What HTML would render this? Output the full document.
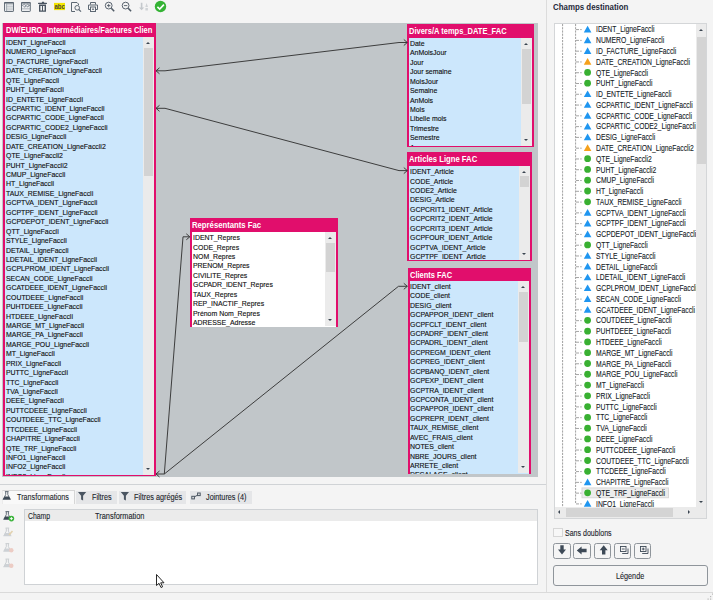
<!DOCTYPE html>
<html><head><meta charset="utf-8"><style>
*{margin:0;padding:0;box-sizing:border-box}
html,body{width:713px;height:600px;overflow:hidden;background:#f4f4f4;font-family:"Liberation Sans", sans-serif;}
body{position:relative}
.abs{position:absolute}
.canvas{position:absolute;left:2px;top:23px;width:536px;height:454px;background:#c1c6c9}
.box{position:absolute;background:#e10e6c;overflow:hidden}
.hd{position:absolute;height:10px;color:#fff;font-size:8.2px;font-weight:bold;line-height:10px;white-space:nowrap;transform-origin:0 0}
.bd{position:absolute;left:2px;right:2px;top:13.8px;bottom:0.8px;overflow:hidden}
.r{position:absolute;left:0.8px;height:9.43px;line-height:9.43px;font-size:8.1px;color:#111;white-space:nowrap;-webkit-text-stroke:0.14px #111;transform:scaleX(0.855);transform-origin:0 0;margin-top:1px}
.sb{position:absolute;right:2px;width:11.2px;background:#ebebeb}
.th{position:absolute;left:1px;right:1px;background:#d3d3d3}
.ua,.da{position:absolute;left:3px;width:0;height:0;border-left:2.5px solid transparent;border-right:2.5px solid transparent}
.ua{top:5px;border-bottom:2.5px solid #3a4550}
.da{bottom:5px;border-top:2.5px solid #3a4550}
.tt{position:absolute;left:40.9px;height:9.4px;line-height:9.4px;font-size:8.6px;color:#141a26;white-space:nowrap;-webkit-text-stroke:0.1px #141a26;transform:scaleX(0.79);transform-origin:0 0;margin-top:0.6px}
.t{position:absolute;white-space:nowrap;font-size:8px;color:#222;letter-spacing:-0.5px;-webkit-text-stroke:0.15px #222}
</style></head><body>

<div class="canvas"></div>
<div class="box" style="left:3px;top:23.25px;width:153px;height:452.75px"><div style="position:absolute;left:0;top:0;width:149.50px;height:14px;overflow:hidden"><div class="hd" style="left:3.1px;top:2.30px;transform:scaleX(0.9218)">DW/EURO_Intermédiaires/Factures Clien</div></div><div class="bd" style="background:#cce7fc;top:13.8px"><div class="r" style="top:0.00px">IDENT_LigneFaccli</div><div class="r" style="top:9.43px">NUMERO_LigneFaccli</div><div class="r" style="top:18.86px">ID_FACTURE_LigneFaccli</div><div class="r" style="top:28.29px">DATE_CREATION_LigneFaccli</div><div class="r" style="top:37.72px">QTE_LigneFaccli</div><div class="r" style="top:47.15px">PUHT_LigneFaccli</div><div class="r" style="top:56.58px">ID_ENTETE_LigneFaccli</div><div class="r" style="top:66.01px">GCPARTIC_IDENT_LigneFaccli</div><div class="r" style="top:75.44px">GCPARTIC_CODE_LigneFaccli</div><div class="r" style="top:84.87px">GCPARTIC_CODE2_LigneFaccli</div><div class="r" style="top:94.30px">DESIG_LigneFaccli</div><div class="r" style="top:103.73px">DATE_CREATION_LigneFaccli2</div><div class="r" style="top:113.16px">QTE_LigneFaccli2</div><div class="r" style="top:122.59px">PUHT_LigneFaccli2</div><div class="r" style="top:132.02px">CMUP_LigneFaccli</div><div class="r" style="top:141.45px">HT_LigneFaccli</div><div class="r" style="top:150.88px">TAUX_REMISE_LigneFaccli</div><div class="r" style="top:160.31px">GCPTVA_IDENT_LigneFaccli</div><div class="r" style="top:169.74px">GCPTPF_IDENT_LigneFaccli</div><div class="r" style="top:179.17px">GCPDEPOT_IDENT_LigneFaccli</div><div class="r" style="top:188.60px">QTT_LigneFaccli</div><div class="r" style="top:198.03px">STYLE_LigneFaccli</div><div class="r" style="top:207.46px">DETAIL_LigneFaccli</div><div class="r" style="top:216.89px">LDETAIL_IDENT_LigneFaccli</div><div class="r" style="top:226.32px">GCPLPROM_IDENT_LigneFaccli</div><div class="r" style="top:235.75px">SECAN_CODE_LigneFaccli</div><div class="r" style="top:245.18px">GCATDEEE_IDENT_LigneFaccli</div><div class="r" style="top:254.61px">COUTDEEE_LigneFaccli</div><div class="r" style="top:264.04px">PUHTDEEE_LigneFaccli</div><div class="r" style="top:273.47px">HTDEEE_LigneFaccli</div><div class="r" style="top:282.90px">MARGE_MT_LigneFaccli</div><div class="r" style="top:292.33px">MARGE_PA_LigneFaccli</div><div class="r" style="top:301.76px">MARGE_POU_LigneFaccli</div><div class="r" style="top:311.19px">MT_LigneFaccli</div><div class="r" style="top:320.62px">PRIX_LigneFaccli</div><div class="r" style="top:330.05px">PUTTC_LigneFaccli</div><div class="r" style="top:339.48px">TTC_LigneFaccli</div><div class="r" style="top:348.91px">TVA_LigneFaccli</div><div class="r" style="top:358.34px">DEEE_LigneFaccli</div><div class="r" style="top:367.77px">PUTTCDEEE_LigneFaccli</div><div class="r" style="top:377.20px">COUTDEEE_TTC_LigneFaccli</div><div class="r" style="top:386.63px">TTCDEEE_LigneFaccli</div><div class="r" style="top:396.06px">CHAPITRE_LigneFaccli</div><div class="r" style="top:405.49px">QTE_TRF_LigneFaccli</div><div class="r" style="top:414.92px">INFO1_LigneFaccli</div><div class="r" style="top:424.35px">INFO2_LigneFaccli</div><div class="r" style="top:433.78px">INFO3_LigneFaccli</div></div><div class="sb" style="top:13.8px;bottom:1.1px"><div class="ua"></div><div class="da"></div><div class="th" style="top:10.95px;height:127.75px"></div></div></div>
<div class="box" style="left:407.4px;top:24.2px;width:127.0px;height:122.60000000000001px"><div style="position:absolute;left:0;top:0;width:123.50px;height:14px;overflow:hidden"><div class="hd" style="left:2.1px;top:2.90px;transform:scaleX(0.9163)">Divers/A temps_DATE_FAC</div></div><div class="bd" style="background:#cce7fc;top:13.8px"><div class="r" style="top:0.00px">Date</div><div class="r" style="top:9.43px">AnMoisJour</div><div class="r" style="top:18.86px">Jour</div><div class="r" style="top:28.29px">Jour semaine</div><div class="r" style="top:37.72px">MoisJour</div><div class="r" style="top:47.15px">Semaine</div><div class="r" style="top:56.58px">AnMois</div><div class="r" style="top:66.01px">Mois</div><div class="r" style="top:75.44px">Libelle mois</div><div class="r" style="top:84.87px">Trimestre</div><div class="r" style="top:94.30px">Semestre</div><div class="r" style="top:103.73px">Annee</div></div><div class="sb" style="top:13.8px;bottom:1.1px"><div class="ua"></div><div class="da"></div><div class="th" style="top:11.00px;height:55.50px"></div></div></div>
<div class="box" style="left:407.4px;top:152.3px;width:124.60000000000002px;height:108.69999999999999px"><div style="position:absolute;left:0;top:0;width:121.10px;height:14px;overflow:hidden"><div class="hd" style="left:2.0px;top:2.90px;transform:scaleX(0.9369)">Articles Ligne FAC</div></div><div class="bd" style="background:#cce7fc;top:13.8px"><div class="r" style="top:0.00px">IDENT_Article</div><div class="r" style="top:9.43px">CODE_Article</div><div class="r" style="top:18.86px">CODE2_Article</div><div class="r" style="top:28.29px">DESIG_Article</div><div class="r" style="top:37.72px">GCPCRIT1_IDENT_Article</div><div class="r" style="top:47.15px">GCPCRIT2_IDENT_Article</div><div class="r" style="top:56.58px">GCPCRIT3_IDENT_Article</div><div class="r" style="top:66.01px">GCPFOUR_IDENT_Article</div><div class="r" style="top:75.44px">GCPTVA_IDENT_Article</div><div class="r" style="top:84.87px">GCPTPF_IDENT_Article</div></div><div class="sb" style="top:13.8px;bottom:1.1px"><div class="ua"></div><div class="da"></div><div class="th" style="top:10.30px;height:10.90px"></div></div></div>
<div class="box" style="left:407.5px;top:268px;width:123.5px;height:206.39999999999998px"><div style="position:absolute;left:0;top:0;width:120.00px;height:14px;overflow:hidden"><div class="hd" style="left:2.1px;top:2.50px;transform:scaleX(0.9149)">Clients FAC</div></div><div class="bd" style="background:#cce7fc;top:12.9px"><div class="r" style="top:0.00px">IDENT_client</div><div class="r" style="top:9.43px">CODE_client</div><div class="r" style="top:18.86px">DESIG_client</div><div class="r" style="top:28.29px">GCPAPPOR_IDENT_client</div><div class="r" style="top:37.72px">GCPFCLT_IDENT_client</div><div class="r" style="top:47.15px">GCPADRF_IDENT_client</div><div class="r" style="top:56.58px">GCPADRL_IDENT_client</div><div class="r" style="top:66.01px">GCPREGM_IDENT_client</div><div class="r" style="top:75.44px">GCPREG_IDENT_client</div><div class="r" style="top:84.87px">GCPBANQ_IDENT_client</div><div class="r" style="top:94.30px">GCPEXP_IDENT_client</div><div class="r" style="top:103.73px">GCPTRA_IDENT_client</div><div class="r" style="top:113.16px">GCPCONTA_IDENT_client</div><div class="r" style="top:122.59px">GCPAPPOR_IDENT_client</div><div class="r" style="top:132.02px">GCPREPR_IDENT_client</div><div class="r" style="top:141.45px">TAUX_REMISE_client</div><div class="r" style="top:150.88px">AVEC_FRAIS_client</div><div class="r" style="top:160.31px">NOTES_client</div><div class="r" style="top:169.74px">NBRE_JOURS_client</div><div class="r" style="top:179.17px">ARRETE_client</div><div class="r" style="top:188.60px">DECALAGE_client</div></div><div class="sb" style="top:12.9px;bottom:1.1px"><div class="ua"></div><div class="da"></div><div class="th" style="top:11.10px;height:50.50px"></div></div></div>
<div class="box" style="left:190.3px;top:218.3px;width:147.5px;height:109.0px"><div style="position:absolute;left:0;top:0;width:144.00px;height:14px;overflow:hidden"><div class="hd" style="left:2.2px;top:2.80px;transform:scaleX(0.9432)">Représentants Fac</div></div><div class="bd" style="background:#fff;top:13.8px"><div class="r" style="top:0.00px">IDENT_Repres</div><div class="r" style="top:9.43px">CODE_Repres</div><div class="r" style="top:18.86px">NOM_Repres</div><div class="r" style="top:28.29px">PRENOM_Repres</div><div class="r" style="top:37.72px">CIVILITE_Repres</div><div class="r" style="top:47.15px">GCPADR_IDENT_Repres</div><div class="r" style="top:56.58px">TAUX_Repres</div><div class="r" style="top:66.01px">REP_INACTIF_Repres</div><div class="r" style="top:75.44px">Prénom Nom_Repres</div><div class="r" style="top:84.87px">ADRESSE_Adresse</div></div><div class="sb" style="top:13.8px;bottom:1.1px"><div class="ua"></div><div class="da"></div><div class="th" style="top:11.30px;height:29.10px"></div></div></div>
<svg class="abs" style="left:0;top:0" width="713" height="600"><g fill="none" stroke="#363636" stroke-width="0.95"><path d="M156,70.8 L165,70.8 L399,42.5 L407.3,42.5"/><path d="M159.5,67.8 L156,70.8 L159.5,73.8"/><path d="M403.8,39.5 L407.3,42.5 L403.8,45.5"/><path d="M156,108.3 L165,108.3 L399,170.6 L407.3,170.6"/><path d="M159.5,105.3 L156,108.3 L159.5,111.3"/><path d="M403.8,167.6 L407.3,170.6 L403.8,173.6"/><path d="M156,474 L164.3,474 L183,236.8 L189.8,236.8"/><path d="M159.5,471 L156,474 L159.5,477"/><path d="M186.3,233.8 L189.8,236.8 L186.3,239.8"/><path d="M164.3,474 L398.5,286.3 L407.3,286.3"/><path d="M403.8,283.3 L407.3,286.3 L403.8,289.3"/></g></svg>
<svg class="abs" style="left:0;top:0" width="170" height="14">
<g fill="none" stroke="#56616c" stroke-width="0.9">
 <rect x="4.5" y="2.5" width="9" height="9" rx="0.6" fill="#e9ebed"/>
 <path d="M4.2,2.9 H13.8" stroke-width="1.3"/>
 <path d="M6.6,3.2 V11.3" stroke="#8c959e" stroke-width="0.8"/>
 <path d="M7,4.7 H13 M7,6.4 H13 M7,8.1 H13 M7,9.8 H13" stroke="#aab1b8" stroke-width="0.6"/>
 <rect x="21.5" y="2.5" width="8.8" height="9" rx="0.6" fill="#eceef0"/>
 <path d="M21.2,2.9 H30.6" stroke-width="1.2"/>
 <path d="M22,5.2 H23.2 M28.8,5.2 H30" stroke-width="0.8"/>
 <path d="M23.2,5.2 C23.6,3.8 25.2,3.8 25.6,5.6 C26,7.4 24,7.4 23.6,6 M26.2,5.6 C26.6,3.8 28.4,3.8 28.8,5.2 C29.2,6.8 27,7.4 26.6,6" stroke-width="0.8" stroke="#66717c"/>
 <path d="M22,8.8 H30" stroke="#9aa2aa" stroke-width="0.7"/>
</g>
<g fill="#4a5561">
 <rect x="38" y="2.7" width="9" height="1.2" rx="0.5"/>
 <rect x="41.8" y="1.8" width="2.4" height="1.2" rx="0.4"/>
 <path d="M39,4.5 H46 V11.7 H39 Z M40.4,6 V10.4 H42 V6 Z M43,6 V10.4 H44.6 V6 Z" fill-rule="evenodd"/>
 <rect x="54" y="2.9" width="11" height="7.2" fill="#f4e600"/>
</g>
<text x="54.4" y="9.0" font-family="Liberation Sans" font-size="7.8" font-weight="bold" fill="#4a4a30" textLength="10.4" lengthAdjust="spacingAndGlyphs">abc</text>
<g fill="none" stroke="#5d6873" stroke-width="1">
 <path d="M77,2.5 H71.5 V11.5 H75" />
 <path d="M77,2.5 L78.5,4 V5"/>
 <circle cx="77.2" cy="7.8" r="2.3"/>
 <path d="M78.8,9.5 L81,11.6" stroke-width="1.3"/>
 <path d="M90.5,4.5 V2.5 H95.5 V4.5"/>
 <path d="M90,9.5 H88.5 V5 H97.5 V9.5 H96"/>
 <rect x="90.5" y="7" width="5" height="4.5"/>
 <rect x="92.2" y="8.5" width="1.6" height="1.5" fill="#5d6873" stroke="none"/>
</g>
<g fill="none" stroke="#505b66" stroke-width="0.95">
 <circle cx="108.7" cy="5.6" r="3.4"/>
 <path d="M107,5.6 H110.4 M108.7,3.9 V7.3" stroke-width="0.9"/>
 <path d="M111.3,8.3 L114.2,11.2" stroke-width="1.6"/>
 <circle cx="125.6" cy="5.6" r="3.4"/>
 <path d="M123.9,5.6 H127.3" stroke-width="0.9"/>
 <path d="M128.2,8.3 L131.1,11.2" stroke-width="1.6"/>
</g>
<g fill="#c4c8cc">
 <path d="M140.8,2.8 H142.4 V7.5 H144.2 L141.6,10.3 L139,7.5 H140.8 Z"/>
 <path d="M145.3,7 L146.6,3 L148,7 Z M145.4,8 H147.9 V10.5 H145.4 Z" fill="#d0d3d6"/>
</g>
<circle cx="160.5" cy="6.5" r="5.7" fill="#35b335"/>
<path d="M157.4,6.8 L159.7,9.0 L163.9,4.6" fill="none" stroke="#fff" stroke-width="1.6"/>
</svg>
<div class="abs" style="left:0;top:484px;width:546px;height:1px;background:#d0d3d6"></div>
<div class="abs" style="left:546px;top:0;width:1px;height:592.5px;background:#dcdcdc"></div>
<div class="abs" style="left:0;top:592px;width:713px;height:1px;background:#dadada"></div>
<svg class="abs" style="left:700px;top:588px" width="13" height="12"><g fill="#b8b8b8"><rect x="10" y="8" width="1.2" height="1.2"/><rect x="10" y="10.5" width="1.2" height="1.2"/><rect x="7.5" y="10.5" width="1.2" height="1.2"/><rect x="12" y="5.5" width="1" height="1.2"/></g></svg>
<div class="abs" style="left:1.5px;top:490.3px;width:73px;height:14px;background:#f9f9f9;border:1px solid #d6d6d6;border-left-color:#ebebeb;border-bottom:none"></div>
<div class="abs" style="left:76.2px;top:491.2px;width:40.5px;height:12.5px;background:#e5e6e8"></div>
<div class="abs" style="left:118.9px;top:491.2px;width:67.3px;height:12.5px;background:#e5e6e8"></div>
<div class="abs" style="left:189.5px;top:491.2px;width:62.5px;height:12.5px;background:#e5e6e8"></div>
<div class="abs" style="left:16.8px;top:492.00px;height:10px;line-height:10px;font-size:8.6px;color:#1a1d2a;white-space:nowrap;transform:scaleX(0.8413);transform-origin:0 0;-webkit-text-stroke:0.1px #1a1d2a;">Transformations</div>
<div class="abs" style="left:91.9px;top:492.20px;height:10px;line-height:10px;font-size:8.6px;color:#1a1d2a;white-space:nowrap;transform:scaleX(0.8373);transform-origin:0 0;-webkit-text-stroke:0.1px #1a1d2a;">Filtres</div>
<div class="abs" style="left:134.3px;top:492.20px;height:10px;line-height:10px;font-size:8.6px;color:#1a1d2a;white-space:nowrap;transform:scaleX(0.8492);transform-origin:0 0;-webkit-text-stroke:0.1px #1a1d2a;">Filtres agrégés</div>
<div class="abs" style="left:205.8px;top:492.40px;height:10px;line-height:10px;font-size:8.6px;color:#1a1d2a;white-space:nowrap;transform:scaleX(0.8453);transform-origin:0 0;-webkit-text-stroke:0.1px #1a1d2a;">Jointures (4)</div>
<svg class="abs" style="left:0;top:485px" width="260" height="40">
<path d="M4.9,6.6 H8.6 M5.7,6.8 V9.6 L3.3,14.2 M7.8,6.8 V9.6 L10.2,14.2" fill="none" stroke="#56616c" stroke-width="0.9"/><path d="M4.6,11.6 H8.9 L10.9,14.8 H2.6 Z" fill="#3e4a56"/>
<g fill="#4a5561">
 <path d="M78,7 H86.2 L83.1,10.8 V15.6 L81.1,14.4 V10.8 Z"/>
 <path d="M120.8,7 H129 L125.9,10.8 V15.6 L123.9,14.4 V10.8 Z"/>
</g>
<g fill="none" stroke="#4a5561" stroke-width="1">
 <rect x="191.8" y="11.3" width="2.6" height="2.6"/>
 <rect x="197.6" y="8" width="2.6" height="2.6"/>
 <path d="M194.4,11.8 L197.6,10.2" />
</g>
</svg>
<div class="abs" style="left:24.3px;top:509px;width:514.2px;height:75.5px;background:#fff;border:1px solid #cfd2d5"></div>
<div class="abs" style="left:25.3px;top:510px;width:512.2px;height:10.8px;background:#ebebeb"></div>
<div class="abs" style="left:27.7px;top:510.50px;height:10px;line-height:10px;font-size:8.6px;color:#1a1d2a;white-space:nowrap;transform:scaleX(0.8008);transform-origin:0 0;-webkit-text-stroke:0.1px #1a1d2a;">Champ</div>
<div class="abs" style="left:95.3px;top:510.50px;height:10px;line-height:10px;font-size:8.6px;color:#1a1d2a;white-space:nowrap;transform:scaleX(0.8607);transform-origin:0 0;-webkit-text-stroke:0.1px #1a1d2a;">Transformation</div>
<svg class="abs" style="left:0;top:505px" width="24" height="70">
<g transform="translate(0.6,0)"><path d="M4.9,6.6 H8.6 M5.7,6.8 V9.6 L3.3,14.2 M7.8,6.8 V9.6 L10.2,14.2" fill="none" stroke="#56616c" stroke-width="0.9"/><path d="M4.6,11.6 H8.9 L10.9,14.8 H2.6 Z" fill="#3e4a56"/></g>
<circle cx="11.4" cy="13.6" r="2.8" fill="#3cb43c"/>
<path d="M9.9,13.6 H12.9 M11.4,12.1 V15.1" stroke="#fff" stroke-width="0.9"/>
<g transform="translate(0.6,16.5)"><path d="M4.9,6.6 H8.6 M5.7,6.8 V9.6 L3.3,14.2 M7.8,6.8 V9.6 L10.2,14.2" fill="none" stroke="#c5c9cd" stroke-width="0.9"/><path d="M4.6,11.6 H8.9 L10.9,14.8 H2.6 Z" fill="#cdd1d5"/></g>
<g transform="translate(0.6,32)"><path d="M4.9,6.6 H8.6 M5.7,6.8 V9.6 L3.3,14.2 M7.8,6.8 V9.6 L10.2,14.2" fill="none" stroke="#c5c9cd" stroke-width="0.9"/><path d="M4.6,11.6 H8.9 L10.9,14.8 H2.6 Z" fill="#cdd1d5"/></g>
<g transform="translate(0.6,47.5)"><path d="M4.9,6.6 H8.6 M5.7,6.8 V9.6 L3.3,14.2 M7.8,6.8 V9.6 L10.2,14.2" fill="none" stroke="#c5c9cd" stroke-width="0.9"/><path d="M4.6,11.6 H8.9 L10.9,14.8 H2.6 Z" fill="#cdd1d5"/></g>
<path d="M9,30 L12.5,26" stroke="#e2d2b0" stroke-width="1.6"/>
<circle cx="11.3" cy="45.3" r="2.2" fill="#ecccc4"/>
<circle cx="11.3" cy="60.8" r="2.2" fill="#ecccc4"/>
</svg>
<svg class="abs" style="left:155px;top:573px" width="12" height="18"><path d="M1.5,1.5 V12.5 L4,10.3 L6,14.5 L7.6,13.8 L5.7,9.8 H9 Z" fill="#fff" stroke="#111" stroke-width="0.9" stroke-linejoin="round"/></svg>
<div class="abs" style="left:553.1px;top:1.60px;height:10px;line-height:10px;font-size:8.8px;font-weight:bold;color:#1f2a3a;white-space:nowrap;transform:scaleX(0.8966);transform-origin:0 0;">Champs destination</div>
<div class="abs" style="left:553.8px;top:23.2px;width:153.3px;height:496px;background:#fff;border:1px solid #d4d6d8;overflow:hidden"><svg class="abs" style="left:0;top:0" width="152" height="494"><g stroke="#a4a4a4" stroke-width="1" stroke-dasharray="2.2,1" fill="none"><path d="M7.6,0 V494 M20.6,0 V480" stroke="#a0a0a0"/><path d="M21,5.60 H27.5" stroke-dasharray="3,1.2,1.5,1"/><path d="M21,16.38 H27.5" stroke-dasharray="3,1.2,1.5,1"/><path d="M21,27.16 H27.5" stroke-dasharray="3,1.2,1.5,1"/><path d="M21,37.94 H27.5" stroke-dasharray="3,1.2,1.5,1"/><path d="M21,48.72 H27.5" stroke-dasharray="3,1.2,1.5,1"/><path d="M21,59.50 H27.5" stroke-dasharray="3,1.2,1.5,1"/><path d="M21,70.28 H27.5" stroke-dasharray="3,1.2,1.5,1"/><path d="M21,81.06 H27.5" stroke-dasharray="3,1.2,1.5,1"/><path d="M21,91.84 H27.5" stroke-dasharray="3,1.2,1.5,1"/><path d="M21,102.62 H27.5" stroke-dasharray="3,1.2,1.5,1"/><path d="M21,113.40 H27.5" stroke-dasharray="3,1.2,1.5,1"/><path d="M21,124.18 H27.5" stroke-dasharray="3,1.2,1.5,1"/><path d="M21,134.96 H27.5" stroke-dasharray="3,1.2,1.5,1"/><path d="M21,145.74 H27.5" stroke-dasharray="3,1.2,1.5,1"/><path d="M21,156.52 H27.5" stroke-dasharray="3,1.2,1.5,1"/><path d="M21,167.30 H27.5" stroke-dasharray="3,1.2,1.5,1"/><path d="M21,178.08 H27.5" stroke-dasharray="3,1.2,1.5,1"/><path d="M21,188.86 H27.5" stroke-dasharray="3,1.2,1.5,1"/><path d="M21,199.64 H27.5" stroke-dasharray="3,1.2,1.5,1"/><path d="M21,210.42 H27.5" stroke-dasharray="3,1.2,1.5,1"/><path d="M21,221.20 H27.5" stroke-dasharray="3,1.2,1.5,1"/><path d="M21,231.98 H27.5" stroke-dasharray="3,1.2,1.5,1"/><path d="M21,242.76 H27.5" stroke-dasharray="3,1.2,1.5,1"/><path d="M21,253.54 H27.5" stroke-dasharray="3,1.2,1.5,1"/><path d="M21,264.32 H27.5" stroke-dasharray="3,1.2,1.5,1"/><path d="M21,275.10 H27.5" stroke-dasharray="3,1.2,1.5,1"/><path d="M21,285.88 H27.5" stroke-dasharray="3,1.2,1.5,1"/><path d="M21,296.66 H27.5" stroke-dasharray="3,1.2,1.5,1"/><path d="M21,307.44 H27.5" stroke-dasharray="3,1.2,1.5,1"/><path d="M21,318.22 H27.5" stroke-dasharray="3,1.2,1.5,1"/><path d="M21,329.00 H27.5" stroke-dasharray="3,1.2,1.5,1"/><path d="M21,339.78 H27.5" stroke-dasharray="3,1.2,1.5,1"/><path d="M21,350.56 H27.5" stroke-dasharray="3,1.2,1.5,1"/><path d="M21,361.34 H27.5" stroke-dasharray="3,1.2,1.5,1"/><path d="M21,372.12 H27.5" stroke-dasharray="3,1.2,1.5,1"/><path d="M21,382.90 H27.5" stroke-dasharray="3,1.2,1.5,1"/><path d="M21,393.68 H27.5" stroke-dasharray="3,1.2,1.5,1"/><path d="M21,404.46 H27.5" stroke-dasharray="3,1.2,1.5,1"/><path d="M21,415.24 H27.5" stroke-dasharray="3,1.2,1.5,1"/><path d="M21,426.02 H27.5" stroke-dasharray="3,1.2,1.5,1"/><path d="M21,436.80 H27.5" stroke-dasharray="3,1.2,1.5,1"/><path d="M21,447.58 H27.5" stroke-dasharray="3,1.2,1.5,1"/><path d="M21,458.36 H27.5" stroke-dasharray="3,1.2,1.5,1"/><path d="M21,469.14 H27.5" stroke-dasharray="3,1.2,1.5,1"/><path d="M21,479.92 H27.5" stroke-dasharray="3,1.2,1.5,1"/></g><path d="M28.80,8.40 L32.60,1.70 L36.40,8.40 Z" fill="#1f96f0"/><path d="M28.80,19.18 L32.60,12.48 L36.40,19.18 Z" fill="#1f96f0"/><path d="M28.80,29.96 L32.60,23.26 L36.40,29.96 Z" fill="#1f96f0"/><path d="M28.80,40.74 L32.60,34.04 L36.40,40.74 Z" fill="#f5a11c"/><circle cx="32.60" cy="48.42" r="3.4" fill="#39b032"/><circle cx="32.60" cy="59.20" r="3.4" fill="#39b032"/><path d="M28.80,73.08 L32.60,66.38 L36.40,73.08 Z" fill="#1f96f0"/><path d="M28.80,83.86 L32.60,77.16 L36.40,83.86 Z" fill="#1f96f0"/><path d="M28.80,94.64 L32.60,87.94 L36.40,94.64 Z" fill="#1f96f0"/><path d="M28.80,105.42 L32.60,98.72 L36.40,105.42 Z" fill="#1f96f0"/><path d="M28.80,116.20 L32.60,109.50 L36.40,116.20 Z" fill="#1f96f0"/><path d="M28.80,126.98 L32.60,120.28 L36.40,126.98 Z" fill="#f5a11c"/><circle cx="32.60" cy="134.66" r="3.4" fill="#39b032"/><circle cx="32.60" cy="145.44" r="3.4" fill="#39b032"/><circle cx="32.60" cy="156.22" r="3.4" fill="#39b032"/><circle cx="32.60" cy="167.00" r="3.4" fill="#39b032"/><circle cx="32.60" cy="177.78" r="3.4" fill="#39b032"/><path d="M28.80,191.66 L32.60,184.96 L36.40,191.66 Z" fill="#1f96f0"/><path d="M28.80,202.44 L32.60,195.74 L36.40,202.44 Z" fill="#1f96f0"/><path d="M28.80,213.22 L32.60,206.52 L36.40,213.22 Z" fill="#1f96f0"/><circle cx="32.60" cy="220.90" r="3.4" fill="#39b032"/><path d="M28.80,234.78 L32.60,228.08 L36.40,234.78 Z" fill="#1f96f0"/><path d="M28.80,245.56 L32.60,238.86 L36.40,245.56 Z" fill="#1f96f0"/><path d="M28.80,256.34 L32.60,249.64 L36.40,256.34 Z" fill="#1f96f0"/><path d="M28.80,267.12 L32.60,260.42 L36.40,267.12 Z" fill="#1f96f0"/><path d="M28.80,277.90 L32.60,271.20 L36.40,277.90 Z" fill="#1f96f0"/><path d="M28.80,288.68 L32.60,281.98 L36.40,288.68 Z" fill="#1f96f0"/><circle cx="32.60" cy="296.36" r="3.4" fill="#39b032"/><circle cx="32.60" cy="307.14" r="3.4" fill="#39b032"/><circle cx="32.60" cy="317.92" r="3.4" fill="#39b032"/><circle cx="32.60" cy="328.70" r="3.4" fill="#39b032"/><circle cx="32.60" cy="339.48" r="3.4" fill="#39b032"/><circle cx="32.60" cy="350.26" r="3.4" fill="#39b032"/><circle cx="32.60" cy="361.04" r="3.4" fill="#39b032"/><circle cx="32.60" cy="371.82" r="3.4" fill="#39b032"/><circle cx="32.60" cy="382.60" r="3.4" fill="#39b032"/><circle cx="32.60" cy="393.38" r="3.4" fill="#39b032"/><circle cx="32.60" cy="404.16" r="3.4" fill="#39b032"/><circle cx="32.60" cy="414.94" r="3.4" fill="#39b032"/><circle cx="32.60" cy="425.72" r="3.4" fill="#39b032"/><circle cx="32.60" cy="436.50" r="3.4" fill="#39b032"/><circle cx="32.60" cy="447.28" r="3.4" fill="#39b032"/><path d="M28.80,461.16 L32.60,454.46 L36.40,461.16 Z" fill="#1f96f0"/><rect x="27" y="463.94" width="86.5" height="9.8" fill="#ececec" stroke="#d8d8d8" stroke-width="1"/><circle cx="32.60" cy="468.84" r="3.4" fill="#39b032"/><path d="M28.80,482.72 L32.60,476.02 L36.40,482.72 Z" fill="#1f96f0"/></svg><div class="tt" style="top:0.60px">IDENT_LigneFaccli</div><div class="tt" style="top:11.38px">NUMERO_LigneFaccli</div><div class="tt" style="top:22.16px">ID_FACTURE_LigneFaccli</div><div class="tt" style="top:32.94px">DATE_CREATION_LigneFaccli</div><div class="tt" style="top:43.72px">QTE_LigneFaccli</div><div class="tt" style="top:54.50px">PUHT_LigneFaccli</div><div class="tt" style="top:65.28px">ID_ENTETE_LigneFaccli</div><div class="tt" style="top:76.06px">GCPARTIC_IDENT_LigneFaccli</div><div class="tt" style="top:86.84px">GCPARTIC_CODE_LigneFaccli</div><div class="tt" style="top:97.62px">GCPARTIC_CODE2_LigneFaccli</div><div class="tt" style="top:108.40px">DESIG_LigneFaccli</div><div class="tt" style="top:119.18px">DATE_CREATION_LigneFaccli2</div><div class="tt" style="top:129.96px">QTE_LigneFaccli2</div><div class="tt" style="top:140.74px">PUHT_LigneFaccli2</div><div class="tt" style="top:151.52px">CMUP_LigneFaccli</div><div class="tt" style="top:162.30px">HT_LigneFaccli</div><div class="tt" style="top:173.08px">TAUX_REMISE_LigneFaccli</div><div class="tt" style="top:183.86px">GCPTVA_IDENT_LigneFaccli</div><div class="tt" style="top:194.64px">GCPTPF_IDENT_LigneFaccli</div><div class="tt" style="top:205.42px">GCPDEPOT_IDENT_LigneFaccli</div><div class="tt" style="top:216.20px">QTT_LigneFaccli</div><div class="tt" style="top:226.98px">STYLE_LigneFaccli</div><div class="tt" style="top:237.76px">DETAIL_LigneFaccli</div><div class="tt" style="top:248.54px">LDETAIL_IDENT_LigneFaccli</div><div class="tt" style="top:259.32px">GCPLPROM_IDENT_LigneFaccli</div><div class="tt" style="top:270.10px">SECAN_CODE_LigneFaccli</div><div class="tt" style="top:280.88px">GCATDEEE_IDENT_LigneFaccli</div><div class="tt" style="top:291.66px">COUTDEEE_LigneFaccli</div><div class="tt" style="top:302.44px">PUHTDEEE_LigneFaccli</div><div class="tt" style="top:313.22px">HTDEEE_LigneFaccli</div><div class="tt" style="top:324.00px">MARGE_MT_LigneFaccli</div><div class="tt" style="top:334.78px">MARGE_PA_LigneFaccli</div><div class="tt" style="top:345.56px">MARGE_POU_LigneFaccli</div><div class="tt" style="top:356.34px">MT_LigneFaccli</div><div class="tt" style="top:367.12px">PRIX_LigneFaccli</div><div class="tt" style="top:377.90px">PUTTC_LigneFaccli</div><div class="tt" style="top:388.68px">TTC_LigneFaccli</div><div class="tt" style="top:399.46px">TVA_LigneFaccli</div><div class="tt" style="top:410.24px">DEEE_LigneFaccli</div><div class="tt" style="top:421.02px">PUTTCDEEE_LigneFaccli</div><div class="tt" style="top:431.80px">COUTDEEE_TTC_LigneFaccli</div><div class="tt" style="top:442.58px">TTCDEEE_LigneFaccli</div><div class="tt" style="top:453.36px">CHAPITRE_LigneFaccli</div><div class="tt" style="top:464.14px">QTE_TRF_LigneFaccli</div><div class="tt" style="top:474.92px">INFO1_LigneFaccli</div><div class="abs" style="left:141.2px;top:0;width:11px;height:483.1px;background:#ebebeb"></div><div class="abs" style="left:142.2px;top:13.2px;width:9px;height:126.5px;background:#d4d4d4"></div><div class="abs" style="left:144.2px;top:5.2px;width:0;height:0;border-left:2.5px solid transparent;border-right:2.5px solid transparent;border-bottom:2.6px solid #3a4550"></div><div class="abs" style="left:144.2px;top:476.5px;width:0;height:0;border-left:2.5px solid transparent;border-right:2.5px solid transparent;border-top:2.6px solid #3a4550"></div><div class="abs" style="left:0;top:483.1px;width:152px;height:11px;background:#ebebeb"></div><div class="abs" style="left:11.7px;top:484.1px;width:106.5px;height:9px;background:#d4d4d4"></div><div class="abs" style="left:3px;top:486.1px;width:0;height:0;border-top:2.5px solid transparent;border-bottom:2.5px solid transparent;border-right:2.6px solid #3a4550"></div><div class="abs" style="left:133px;top:486.1px;width:0;height:0;border-top:2.5px solid transparent;border-bottom:2.5px solid transparent;border-left:2.6px solid #3a4550"></div></div>
<div class="abs" style="left:553px;top:528.2px;width:9.5px;height:9px;background:#f7f7f7;border:1px solid #d6d6d6"></div>
<div class="abs" style="left:565px;top:527.60px;height:10px;line-height:10px;font-size:8.6px;color:#1a1d2a;white-space:nowrap;transform:scaleX(0.8190);transform-origin:0 0;-webkit-text-stroke:0.1px #1a1d2a;">Sans doublons</div>
<div class="abs" style="left:553.2px;top:542.8px;width:17.4px;height:15.8px;border:1px solid #8f959b;border-radius:2.5px;background:#f5f5f5"></div><div class="abs" style="left:573.4px;top:542.8px;width:17.4px;height:15.8px;border:1px solid #8f959b;border-radius:2.5px;background:#f5f5f5"></div><div class="abs" style="left:593.6px;top:542.8px;width:17.4px;height:15.8px;border:1px solid #8f959b;border-radius:2.5px;background:#f5f5f5"></div><div class="abs" style="left:614.0px;top:542.8px;width:17.4px;height:15.8px;border:1px solid #8f959b;border-radius:2.5px;background:#f5f5f5"></div><div class="abs" style="left:634.1px;top:542.8px;width:17.4px;height:15.8px;border:1px solid #8f959b;border-radius:2.5px;background:#f5f5f5"></div>
<svg class="abs" style="left:550px;top:540px" width="110" height="22">
<g fill="#3e4a57">
 <path d="M10.3,5.3 H13.7 V9.6 H16 L12,14.6 L8,9.6 H10.3 Z"/>
 <path d="M26.8,10.5 L31.6,6.6 V8.8 H36.6 V12.2 H31.6 V14.4 Z"/>
 <path d="M52,14.6 H55.4 V10.3 H57.7 L53.7,5.3 L49.7,10.3 H52 Z"/>
</g>
<g fill="none" stroke="#3e4a57" stroke-width="0.9">
 <rect x="70.5" y="6.5" width="5.5" height="5"/>
 <path d="M72.2,13.5 H78 V8.5"/>
 <path d="M71.8,9 H74.7"/>
 <rect x="90.5" y="6.5" width="5.5" height="5"/>
 <path d="M92.2,13.5 H98 V8.5"/>
 <path d="M91.8,9 H94.7 M93.25,7.6 V10.4"/>
</g>
</svg>
<div class="abs" style="left:553.3px;top:565.4px;width:154.7px;height:20.4px;border:1px solid #8f959b;border-radius:3px;background:#f5f5f5"></div>
<div class="abs" style="left:615.7px;top:571.20px;height:10px;line-height:10px;font-size:8.6px;color:#1a1d2a;white-space:nowrap;transform:scaleX(0.8424);transform-origin:0 0;-webkit-text-stroke:0.1px #1a1d2a;">Légende</div>
</body></html>
